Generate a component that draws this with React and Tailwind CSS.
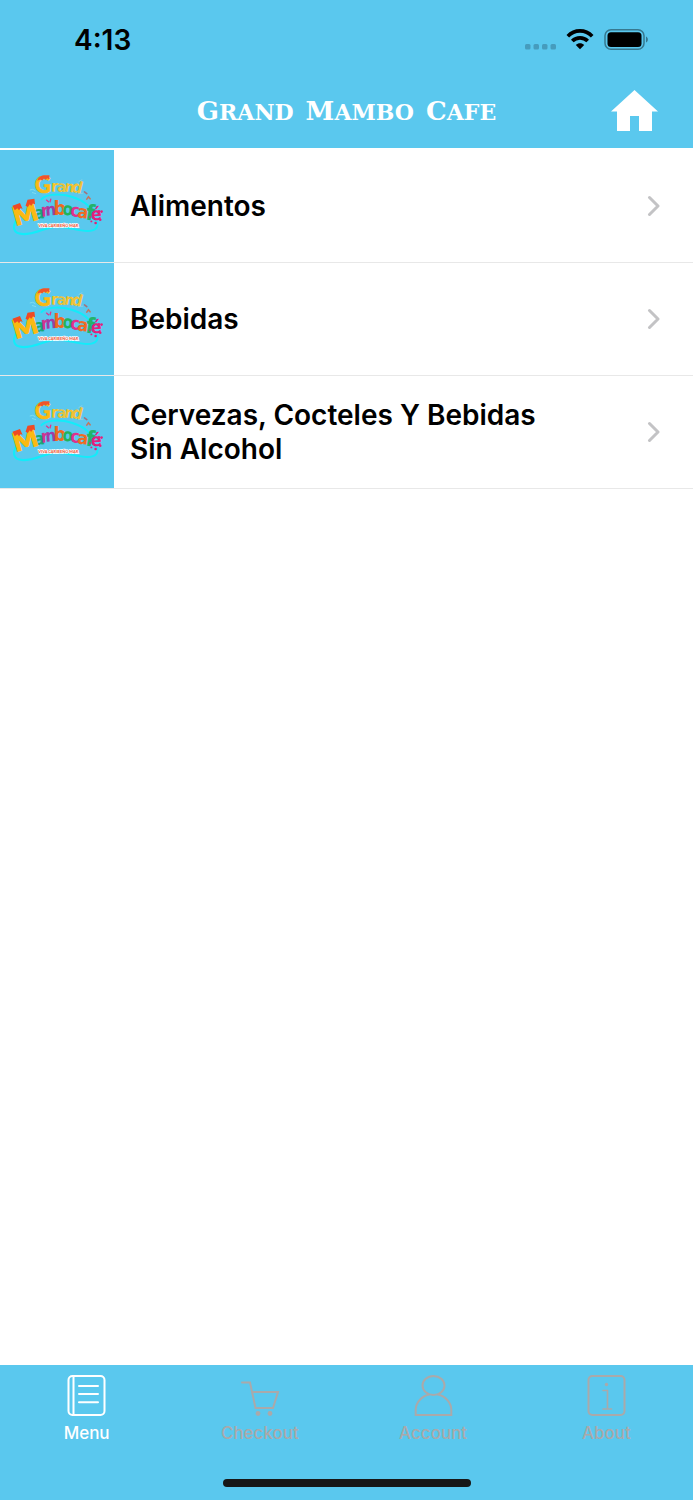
import React from "react";

const categories = [
  "Alimentos",
  "Bebidas",
  "Cervezas, Cocteles Y Bebidas Sin Alcohol",
];

// letter, x, baseline, size, angle, colour
const logoLetters = [
  ["r", 153, 127, 48, 2, "#f7c52a"],
  ["a", 171, 127, 46, 4, "#e9c33c"],
  ["n", 193, 126, 46, 8, "#f5c22c"],
  ["d", 214, 127, 50, 14, "#eec23a"],
  ["a", 103, 212, 54, -8, "#19a974"],
  ["r", 123, 204, 54, -4, "#d0368f"],
  ["n", 137, 201, 52, -4, "#a23ca6"],
  ["b", 160, 197, 60, 0, "#ee6a1f"],
  ["o", 186, 198, 54, 4, "#23b35c"],
  ["c", 211, 202, 54, 4, "#e0318c"],
  ["a", 232, 206, 54, 6, "#ef6b22"],
  ["f", 257, 212, 66, 8, "#23b36b"],
  ["é", 276, 215, 54, -4, "#e2207c"],
];

const MamboLogo = () => (
  <svg
    viewBox="0 0 342 342"
    className="w-[114px] h-full shrink-0 bg-[#5ac8ee]"
    role="img"
    aria-label="Grand Mambocafé"
  >
    <path
      d="M46 216C36 232 37 250 56 255C88 264 125 240 160 235C198 229 236 251 272 247C293 245 300 231 290 214C284 200 286 188 266 170C240 145 195 133 156 137C139 139 128 144 122 152"
      fill="none"
      stroke="#12ecfa"
      strokeWidth="6"
    />
    <g fontFamily="'Liberation Sans Narrow', 'DejaVu Sans Condensed', sans-serif" fontWeight="700">
      {logoLetters.map(([char, x, y, size, angle, fill], i) => (
        <text
          key={i}
          x={x}
          y={y}
          fontSize={size}
          fill={fill}
          transform={`rotate(${angle} ${x} ${y})`}
        >
          {char}
        </text>
      ))}
    </g>
    <g fontFamily="Lato, sans-serif" fontWeight="900" fill="#fbb912" stroke="#fbb912">
      <text x="103" y="130" fontSize="68" strokeWidth="2">
        G
      </text>
      <text x="46" y="231" fontSize="78" strokeWidth="4" transform="rotate(-16 46 231)">
        M
      </text>
    </g>
    {/* red drips */}
    <path
      d="M111 94C113 84 121 78 131 77L148 77L147 90L141 86L137 91L131 87L126 93L120 90Z"
      fill="#f0542b"
    />
    <path
      d="M35 170L58 162L66 180L60 177L55 184L50 178L42 184Z"
      fill="#ef4a24"
    />
    <path
      d="M75 170L81 152L102 149L104 166L97 163L92 171L88 166L82 174Z"
      fill="#ef4a24"
    />
    <g fill="none" strokeLinecap="round">
      <path d="M89 122L97 120L104 124M96 130L106 133" stroke="#7fdcf0" strokeWidth="3" />
      <path d="M238 96L247 91M237 133L250 132" stroke="#8fcfe0" strokeWidth="3" />
      <path d="M255 128L262 133" stroke="#a2717c" strokeWidth="5" />
      <path d="M262 150L267 143L272 149" stroke="#c5765d" strokeWidth="5" />
      <path d="M139 153L145 158M152 150L150 158" stroke="#e2338b" strokeWidth="4" />
    </g>
    <g fill="#e2207c">
      <circle cx="299" cy="187" r="4" />
      <circle cx="307" cy="188" r="4" />
      <circle cx="303" cy="213" r="4" />
      <circle cx="289" cy="223" r="4" />
      <circle cx="276" cy="218" r="3" />
      <circle cx="272" cy="205" r="3" />
    </g>
    <text
      x="175"
      y="234"
      textAnchor="middle"
      fontFamily="Lato, sans-serif"
      fontWeight="900"
      fontSize="12"
      fill="#ef5a3c"
      stroke="#fff"
      strokeWidth="4"
      paintOrder="stroke"
    >
      VIVA CARIBEÑO MAR
    </text>
  </svg>
);

const StatusBar = () => (
  <div className="flex items-center justify-between h-20 pl-[74px] pr-11">
    <span className="text-[28px] leading-8 font-semibold text-black">4:13</span>
    <div className="flex items-center">
      <svg width="32" height="22" viewBox="0 0 32 22" fill="#469cbd" aria-hidden="true">
        <rect x="1" y="15" width="5.500" height="5.500" rx="1.500" />
        <rect x="9.500" y="15" width="5.500" height="5.500" rx="1.500" />
        <rect x="18" y="15" width="5.500" height="5.500" rx="1.500" />
        <rect x="26.500" y="15" width="5.500" height="5.500" rx="1.500" />
      </svg>
      <svg
        width="28"
        height="22"
        viewBox="0 0 28 22"
        fill="none"
        stroke="#000"
        strokeWidth="3.700"
        className="ml-[10px]"
        aria-hidden="true"
      >
        <path d="M1.800 7.200C8.600 0.200 19.400 0.200 26.200 7.200" />
        <path d="M6.300 12C10.600 7.700 17.400 7.700 21.700 12" />
        <path d="M9.800 15.900C12.100 13.700 15.900 13.700 18.200 15.900L14 20.300Z" fill="#000" stroke="none" />
      </svg>
      <svg width="46" height="22" viewBox="0 0 46 22" className="ml-[9px]" aria-hidden="true">
        <rect x="2" y="0.800" width="39" height="19.500" rx="6" fill="none" stroke="#36788f" strokeWidth="1.500" />
        <rect x="4.500" y="3.200" width="34" height="14.700" rx="3.500" fill="#000" />
        <path d="M43 7.500C45.500 8.500 45.500 12.500 43 13.500Z" fill="#36788f" />
      </svg>
    </div>
  </div>
);

const Header = () => (
  <header className="bg-[#5ac8ee]">
    <StatusBar />
    <div className="grid grid-cols-[1fr_auto_1fr] items-center h-[68px] px-[35px] pb-[6px]">
      <h1 className="col-start-2 flex gap-3 font-['DejaVu_Serif',serif] font-bold uppercase text-[22px] leading-8 text-white">
        <span className="block first-letter:text-[26px]">Grand</span>
        <span className="block first-letter:text-[26px]">Mambo</span>
        <span className="block first-letter:text-[26px]">Cafe</span>
      </h1>
      <button type="button" aria-label="Home" className="justify-self-end">
        <svg width="47" height="42" viewBox="0 0 47 42" fill="#fff" className="block">
          <path d="M23.500 0L47 21.500H41V41H28V26H19V41H6V21.500H0Z" />
        </svg>
      </button>
    </div>
  </header>
);

const CategoryRow = ({ name }) => (
  <li className="h-[113px] border-b border-[#e8e8e8]">
    <a href="#" className="flex items-center h-full pr-[33px]">
      <MamboLogo />
      <span className="flex-1 pl-4 pr-20 text-[28px] leading-[34px] font-semibold text-black">
        {name}
      </span>
      <svg
        width="13"
        height="22"
        viewBox="0 0 13 22"
        fill="none"
        stroke="#c3c3c5"
        strokeWidth="3"
        strokeLinecap="round"
        strokeLinejoin="round"
        aria-hidden="true"
      >
        <path d="M2.500 2.500L11 11L2.500 19.500" />
      </svg>
    </a>
  </li>
);

const MenuIcon = () => (
  <>
    <rect x="2.500" y="1" width="36" height="39" rx="4" />
    <path d="M7.500 1V40M13 11H32M13 19H32M13 27.300H32" />
  </>
);

const CartIcon = () => (
  <>
    <path d="M3 7.500H11L16.500 33H34L39 17H13.500" />
    <circle cx="19" cy="38.500" r="2.400" fill="currentColor" stroke="none" />
    <circle cx="31" cy="38.500" r="2.400" fill="currentColor" stroke="none" />
  </>
);

const AccountIcon = () => (
  <>
    <ellipse cx="20.500" cy="10.500" rx="11" ry="9.500" />
    <path d="M16 19.500C8 21.500 2.700 28 2.700 35V40H38.300V35C38.300 28 33 21.500 25 19.500" />
  </>
);

const AboutIcon = () => (
  <>
    <rect x="2.500" y="1" width="36" height="39" rx="4" />
    <path d="M17 15.500H21.500V34M17 34H25.500" strokeWidth="1.600" />
    <circle cx="20.500" cy="9.500" r="1.700" fill="currentColor" stroke="none" />
  </>
);

const tabs = [
  { label: "Menu", icon: <MenuIcon /> },
  { label: "Checkout", icon: <CartIcon /> },
  { label: "Account", icon: <AccountIcon /> },
  { label: "About", icon: <AboutIcon /> },
];

const BottomNav = ({ current }) => (
  <nav className="h-[135px] pt-[10px] pb-[13px] bg-[#5ac8ee] flex flex-col justify-between">
    <div className="grid grid-cols-4">
      {tabs.map(({ label, icon }) => (
        <button
          key={label}
          type="button"
          className={`flex flex-col items-center ${
            label === current ? "text-white" : "text-[#aaa9aa]"
          }`}
        >
          <svg
            width="41"
            height="42"
            viewBox="0 0 41 42"
            fill="none"
            stroke="currentColor"
            strokeWidth="2"
            strokeLinecap="round"
            aria-hidden="true"
          >
            {icon}
          </svg>
          <span className="mt-1 text-[17px] leading-6 font-medium">{label}</span>
        </button>
      ))}
    </div>
    <div className="w-[248px] h-2 mx-auto rounded-full bg-[#171717]" />
  </nav>
);

export default function App() {
  return (
    <div className="min-h-screen flex flex-col bg-white font-[Inter,sans-serif]">
      <Header />
      <main className="flex-1 pt-[2px]">
        <ul>
          {categories.map((name) => (
            <CategoryRow key={name} name={name} />
          ))}
        </ul>
      </main>
      <BottomNav current="Menu" />
    </div>
  );
}
